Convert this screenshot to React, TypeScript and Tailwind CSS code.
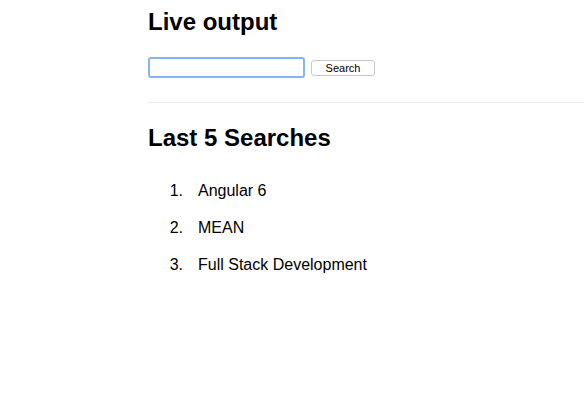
import React, { useState } from "react";

const App = () => {
  const [query, setQuery] = useState("");
  const searches = ["Angular 6", "MEAN", "Full Stack Development"];

  return (
    <div className="min-h-screen bg-white text-black font-['Liberation_Sans',Arial,sans-serif] pl-[148px]">
      <h1 className="pt-[8px] text-[24px] leading-[28px] font-bold">Live output</h1>
      <div className="mt-[21px] flex items-center">
        <input
          className="w-[157px] h-[21px] border-2 border-[#86b4f0] rounded-[3px] outline-none px-1 text-[13px]"
          value={query}
          onChange={(e) => setQuery(e.target.value)}
        />
        <button className="ml-[6px] w-[64px] h-[16px] border border-[#c8c8c8] rounded-[3px] bg-white text-[11px] leading-[14px] flex items-center justify-center">
          Search
        </button>
      </div>
      <hr className="mt-[24px] border-t border-[#ececec]" />
      <h2 className="mt-[21px] text-[24px] leading-[28px] font-bold">Last 5 Searches</h2>
      <ol className="mt-[29px] text-[16px] leading-[19px]">
        {searches.map((s, i) => (
          <li key={i} className="flex mb-[18px]">
            <span className="w-[50px] text-right pr-[15px]">{i + 1}.</span>
            <span>{s}</span>
          </li>
        ))}
      </ol>
    </div>
  );
};

export default App;
